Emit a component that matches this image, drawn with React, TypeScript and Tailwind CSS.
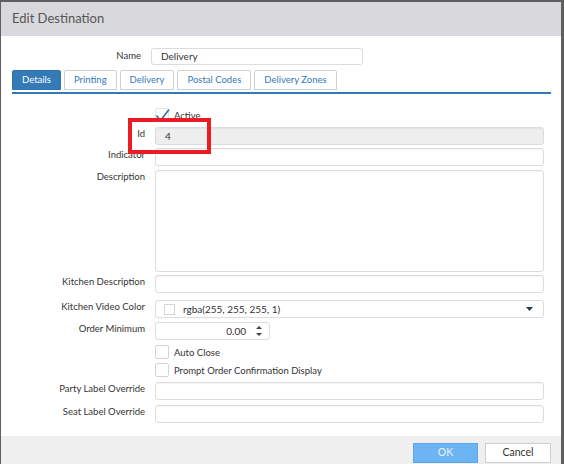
import React from "react";

const font = { fontFamily: "Lato, 'Open Sans', sans-serif" };

function Label({ children }: { children?: React.ReactNode }) {
  return (
    <div className="w-[144px] shrink-0 text-right text-[9.5px] leading-[14px] text-[#333]">
      {children}
    </div>
  );
}

function TextBox({ h = "h-[18px]", gray = false, value }: { h?: string; gray?: boolean; value?: string }) {
  return (
    <div
      className={`${h} flex-1 rounded-[3px] border border-[#dcdcdc] px-[9px] text-[10px] leading-[16px] text-[#333] shadow-[inset_0_1px_1px_rgba(0,0,0,0.04)] ${
        gray ? "bg-[#eeeeee]" : "bg-white"
      }`}
    >
      {value}
    </div>
  );
}

function Check({ checked = false }: { checked?: boolean }) {
  return (
    <svg width="15" height="15" viewBox="0 0 15 15" className="shrink-0 overflow-visible">
      <rect x="0.5" y="0.5" width="13" height="13" rx="1.5" fill="white" stroke={checked ? "#e4e4e4" : "#d4d4d4"} />
      {checked && <path d="M1.5 7.5 L5.5 12.5 L14 1.5" fill="none" stroke="#2f6fb6" strokeWidth="1.6" />}
    </svg>
  );
}

function Row({ label, children, mt }: { label?: string; children: React.ReactNode; mt: string }) {
  return (
    <div className={`flex items-start ${mt}`}>
      <Label>{label}</Label>
      <div className="ml-[10px] flex flex-1">{children}</div>
    </div>
  );
}

function CheckRow({ text, checked, mt }: { text: string; checked?: boolean; mt: string }) {
  return (
    <div className={`flex items-center ${mt}`}>
      <div className="w-[154px] shrink-0" />
      <Check checked={checked} />
      <span className="ml-[4px] text-[9.5px] leading-[14px] text-[#333]">{text}</span>
    </div>
  );
}

const tabs = ["Details", "Printing", "Delivery", "Postal Codes", "Delivery Zones"];

export default function App() {
  return (
    <div className="relative h-[464px] w-[564px] overflow-hidden bg-[#5f5f5f] pl-[1px] pr-[3px] pt-[2px]" style={font}>
      <div className="flex h-[462px] flex-col bg-white">
        <div className="flex h-[34px] shrink-0 items-center bg-[#d9d8dc] pl-[11px] text-[13px] text-[#555]">
          Edit Destination
        </div>

        <div className="flex-1 pr-[17px]">
          <div className="mt-[12px] flex items-center">
            <div className="w-[140px] text-right text-[9.5px] text-[#333]">Name</div>
            <div className="ml-[10px] h-[17px] w-[212px] rounded-[3px] border border-[#dcdcdc] px-[9px] text-[10px] leading-[15px] text-[#333]">
              Delivery
            </div>
          </div>

          <div className="ml-[11px] mr-[-7px] mt-[5px]">
            <div className="flex gap-[3px]">
              {tabs.map((t, i) => (
                <div
                  key={t}
                  className={`flex h-[20px] items-center rounded-t-[2px] border px-[9px] text-[9.5px] ${
                    i === 0 ? "border-[#2f72b0] bg-[#337ab7] text-white" : "border-[#d0d0d0] bg-white text-[#337ab7]"
                  }`}
                >
                  {t}
                </div>
              ))}
            </div>
            <div className="mt-[2px] h-[2px] bg-[#337ab7]" />
          </div>

          <CheckRow text="Active" checked mt="mt-[14px]" />
          <Row label="Id" mt="mt-[4px]">
            <TextBox gray value="4" />
          </Row>
          <Row label="Indicator" mt="mt-[3px]">
            <TextBox />
          </Row>
          <Row label="Description" mt="mt-[4px]">
            <TextBox h="h-[102px]" />
          </Row>
          <Row label="Kitchen Description" mt="mt-[3px]">
            <TextBox />
          </Row>
          <Row label="Kitchen Video Color" mt="mt-[7px]">
            <div className="flex h-[18px] flex-1 items-center rounded-[3px] border border-[#dcdcdc] pl-[8px] pr-[10px] text-[10px] text-[#333]">
              <div className="h-[11px] w-[11px] border border-[#d4d4d4] bg-white" />
              <span className="ml-[8px] flex-1">rgba(255, 255, 255, 1)</span>
              <svg width="7" height="4" viewBox="0 0 7 4">
                <path d="M0 0 H7 L3.5 4 Z" fill="#2b3a4a" />
              </svg>
            </div>
          </Row>
          <Row label="Order Minimum" mt="mt-[4px]">
            <div className="flex h-[18px] w-[115px] items-center justify-end rounded-[3px] border border-[#dcdcdc] pr-[7px] text-[10px] text-[#333]">
              <span>0.00</span>
              <svg width="6" height="12" viewBox="0 0 6 12" className="ml-[10px]">
                <path d="M0 4 L3 1 L6 4 Z" fill="#444" />
                <path d="M0 8 L3 11 L6 8 Z" fill="#444" />
              </svg>
            </div>
          </Row>
          <CheckRow text="Auto Close" mt="mt-[5px]" />
          <CheckRow text="Prompt Order Confirmation Display" mt="mt-[3px]" />
          <Row label="Party Label Override" mt="mt-[4px]">
            <TextBox />
          </Row>
          <Row label="Seat Label Override" mt="mt-[5px]">
            <TextBox />
          </Row>
        </div>

        <div className="flex h-[28px] shrink-0 items-start justify-end gap-[7px] bg-[#efefef] pr-[10px] pt-[7px]">
          <div className="flex h-[20px] w-[65px] items-center justify-center border border-[#5aa7ee] bg-[#6db4f4] text-[10.5px] text-[#e8f2fc]">
            OK
          </div>
          <div className="flex h-[20px] w-[66px] items-center justify-center border border-[#cfcfcf] bg-white text-[10.5px] text-[#333]">
            Cancel
          </div>
        </div>
      </div>

      <div className="absolute left-[128px] top-[118px] h-[36px] w-[83px] border-[4px] border-[#ec1c24]" />
    </div>
  );
}
